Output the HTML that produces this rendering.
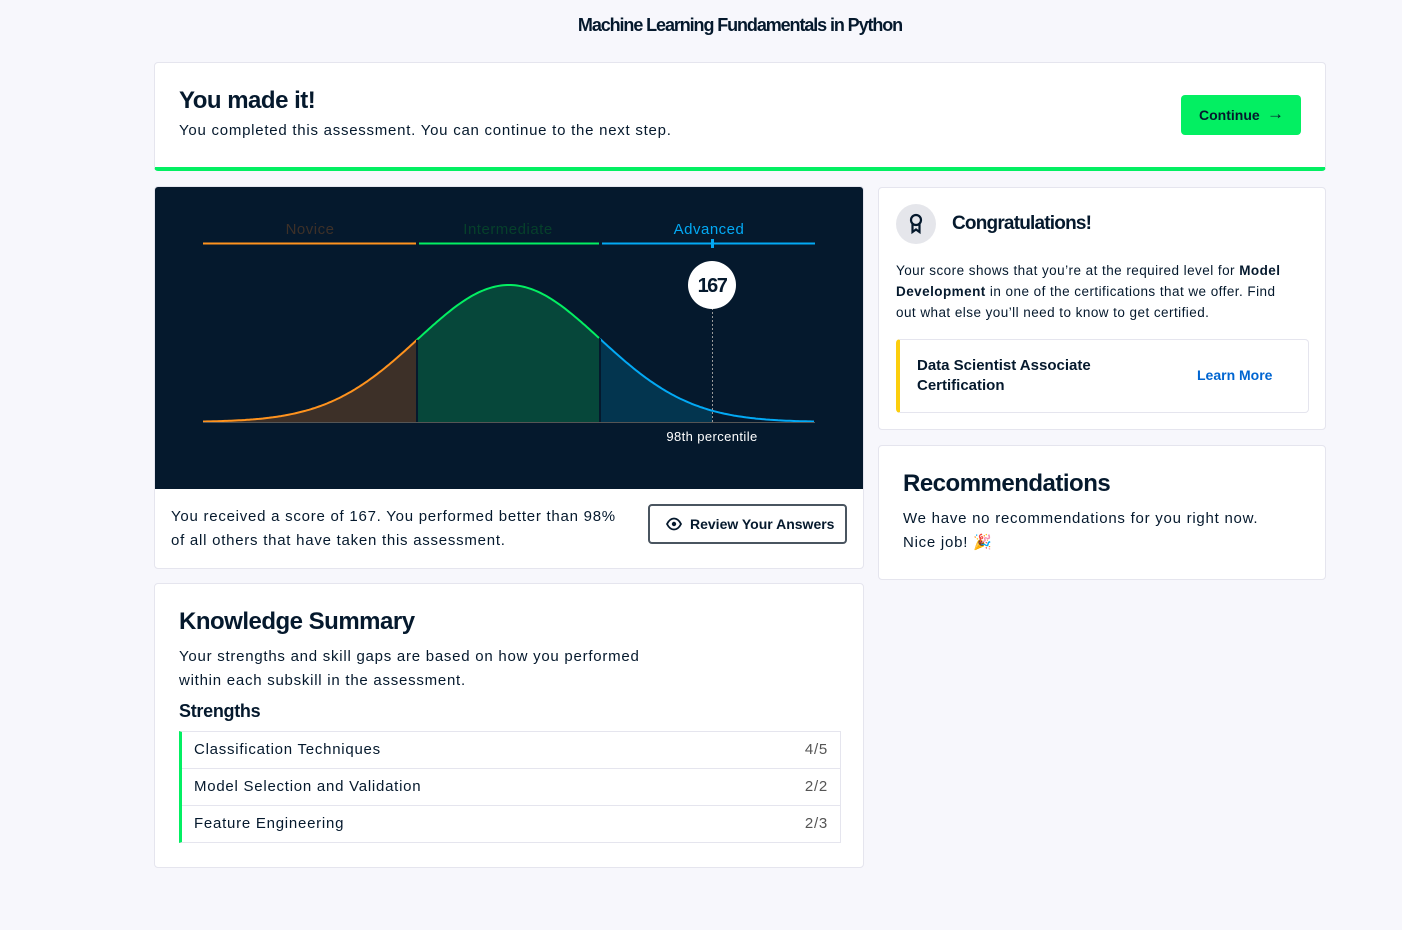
<!DOCTYPE html>
<html><head><meta charset="utf-8"><style>
*{box-sizing:border-box;margin:0;padding:0}
body{width:1402px;height:930px;background:#f7f7fc;font-family:"Liberation Sans",sans-serif;color:#05192d;position:relative;overflow:hidden}
.abs{position:absolute}
.card{position:absolute;background:#fff;border:1px solid #e5e5ee;border-radius:4px}
.t{letter-spacing:0.75px}
</style></head><body>
<div class="abs" style="top:15px;left:0;width:1480px;text-align:center;font-size:18px;font-weight:bold;letter-spacing:-1.1px">Machine Learning Fundamentals in Python</div>

<div class="card" style="left:154px;top:62px;width:1172px;height:109px;border-bottom:4px solid #03ef62">
 <div class="abs" style="left:24px;top:24px;font-size:24px;font-weight:bold;letter-spacing:-0.5px">You made it!</div>
 <div class="abs t" style="left:24px;top:59px;font-size:15px">You completed this assessment. You can continue to the next step.</div>
 <div class="abs" style="left:1026px;top:32px;width:120px;height:40px;background:#03ef62;border-radius:4px;font-size:14px;font-weight:bold;line-height:40px;padding-left:18px">Continue <span style="font-size:17px;position:absolute;left:86px;top:-1px">→</span></div>
</div>

<div class="card" style="left:154px;top:186px;width:710px;height:383px;overflow:hidden">
 <svg class="abs" style="left:0;top:0" width="710" height="302" viewBox="155 187 710 302">
  <rect x="155" y="187" width="710" height="302" fill="#05192d"/>
  <text x="310" y="234" fill="#3d3028" font-size="15" text-anchor="middle" font-family="Liberation Sans" letter-spacing="0.5">Novice</text>
  <text x="508" y="234" fill="#06402b" font-size="15" text-anchor="middle" font-family="Liberation Sans" letter-spacing="0.5">Intermediate</text>
  <text x="709" y="234" fill="#03a9f4" font-size="15" text-anchor="middle" font-family="Liberation Sans" letter-spacing="0.5">Advanced</text>
  <line x1="203" y1="243.5" x2="416" y2="243.5" stroke="#ff931e" stroke-width="2"/>
  <line x1="419" y1="243.5" x2="599" y2="243.5" stroke="#03ef62" stroke-width="2"/>
  <line x1="602" y1="243.5" x2="815" y2="243.5" stroke="#03a9f4" stroke-width="2"/>
  <rect x="711" y="239" width="3" height="9" fill="#03a9f4"/>
  <g id="curve"></g>
  <line x1="203" y1="422.5" x2="815" y2="422.5" stroke="#555" stroke-width="1"/>
  <line x1="712.5" y1="300" x2="712.5" y2="422" stroke="#999" stroke-width="1" stroke-dasharray="2,2"/>
  <ellipse cx="712" cy="285" rx="24" ry="24" fill="#fff"/>
  <text x="712" y="292" fill="#05192d" font-size="20" font-weight="bold" text-anchor="middle" letter-spacing="-1.5" font-family="Liberation Sans">167</text>
  <text x="712" y="441" fill="#fff" font-size="13" text-anchor="middle" font-family="Liberation Sans" letter-spacing="0.4">98th percentile</text>
 </svg>
 <div class="abs t" style="left:16px;top:318px;width:450px;font-size:15px;line-height:24px">You received a score of 167. You performed better than 98% of all others that have taken this assessment.</div>
 <div class="abs" style="left:493px;top:317px;width:199px;height:40px;border:2px solid #4a5560;border-radius:4px;font-size:14px;font-weight:bold;line-height:36px;padding-left:40px">
  <svg class="abs" style="left:16px;top:11px" width="16" height="14" viewBox="0 0 16 14"><path d="M1 7C3 3 5.5 1.5 8 1.5S13 3 15 7C13 11 10.5 12.5 8 12.5S3 11 1 7Z" fill="none" stroke="#05192d" stroke-width="1.8"/><circle cx="8" cy="7" r="2.2" fill="#05192d"/></svg>Review Your Answers</div>
</div>

<div class="card" style="left:878px;top:187px;width:448px;height:243px">
 <div class="abs" style="left:17px;top:16px;width:40px;height:40px;border-radius:50%;background:#e5e6eb"></div>
 <svg class="abs" style="left:29px;top:25px" width="16" height="22" viewBox="0 0 16 22"><circle cx="8" cy="7" r="5" fill="none" stroke="#05192d" stroke-width="2.2"/><path d="M4.5 11V19L8 16.5L11.5 19V11" fill="none" stroke="#05192d" stroke-width="2.2"/></svg>
 <div class="abs" style="left:73px;top:25px;font-size:19px;font-weight:bold;letter-spacing:-0.8px">Congratulations!</div>
 <div class="abs" style="left:17px;top:72px;width:395px;font-size:13.5px;line-height:21px;letter-spacing:0.45px">Your score shows that you’re at the required level for <b>Model Development</b> in one of the certifications that we offer. Find out what else you’ll need to know to get certified.</div>
 <div class="abs" style="left:17px;top:151px;width:413px;height:74px;border:1px solid #e5e5ee;border-left:4px solid #fcce0d;border-radius:4px">
  <div class="abs" style="left:17px;top:16px;font-size:15px;font-weight:bold;line-height:20px">Data Scientist Associate<br>Certification</div>
  <div class="abs" style="left:297px;top:27px;font-size:14px;font-weight:bold;color:#0065d1">Learn More</div>
 </div>
</div>

<div class="card" style="left:878px;top:445px;width:448px;height:135px">
 <div class="abs" style="left:24px;top:24px;font-size:24px;font-weight:bold;letter-spacing:-0.5px">Recommendations</div>
 <div class="abs t" style="left:24px;top:61px;width:380px;font-size:15px;line-height:24px">We have no recommendations for you right now. Nice job! 🎉</div>
</div>

<div class="card" style="left:154px;top:583px;width:710px;height:285px">
 <div class="abs" style="left:24px;top:24px;font-size:24px;font-weight:bold;letter-spacing:-0.5px">Knowledge Summary</div>
 <div class="abs t" style="left:24px;top:61px;width:490px;font-size:15px;line-height:24px">Your strengths and skill gaps are based on how you performed within each subskill in the assessment.</div>
 <div class="abs" style="left:24px;top:117px;font-size:18px;font-weight:bold;letter-spacing:-0.3px">Strengths</div>
 <div class="abs t" style="left:24px;top:147px;width:662px;border:1px solid #e5e5ee;border-left:3px solid #03ef62;font-size:15px">
  <div style="height:37px;line-height:36px;padding:0 12px;border-bottom:1px solid #e5e5ee;display:flex;justify-content:space-between"><span>Classification Techniques</span><span style="color:#555">4/5</span></div>
  <div style="height:37px;line-height:36px;padding:0 12px;border-bottom:1px solid #e5e5ee;display:flex;justify-content:space-between"><span>Model Selection and Validation</span><span style="color:#555">2/2</span></div>
  <div style="height:36px;line-height:36px;padding:0 12px;display:flex;justify-content:space-between"><span>Feature Engineering</span><span style="color:#555">2/3</span></div>
 </div>
</div>

<script>
(function(){
 var m=509,s=91,b=422,h=137;
 function y(x){return b-h*Math.exp(-(x-m)*(x-m)/(2*s*s));}
 function seg(x0,x1){var p=[];for(var x=x0;x<=x1+0.01;x+=2){p.push(x.toFixed(1)+","+y(x).toFixed(1));}return p;}
 var g=document.getElementById("curve"),out="";
 var parts=[[203,417,"#ff931e","#3d3028"],[417,600,"#03ef62","#06473a"],[600,815,"#03a9f4","#03354f"]];
 parts.forEach(function(q){var p=seg(q[0],q[1]);
  out+='<polygon points="'+q[0]+','+b+' '+p.join(" ")+' '+q[1]+','+b+'" fill="'+q[3]+'"/>';
  out+='<polyline points="'+p.join(" ")+'" fill="none" stroke="'+q[2]+'" stroke-width="2"/>';});
 out+='<rect x="712" y="380" width="104" height="42" fill="#05192d"/>';
 var p=seg(712,815);out+='<polyline points="'+p.join(" ")+'" fill="none" stroke="#03a9f4" stroke-width="2"/>';
 out+='<line x1="417" y1="'+y(417)+'" x2="417" y2="422" stroke="#05192d" stroke-width="2"/><line x1="600" y1="'+y(600)+'" x2="600" y2="422" stroke="#05192d" stroke-width="2"/>';
 g.innerHTML=out;
})();
</script>
</body></html>
